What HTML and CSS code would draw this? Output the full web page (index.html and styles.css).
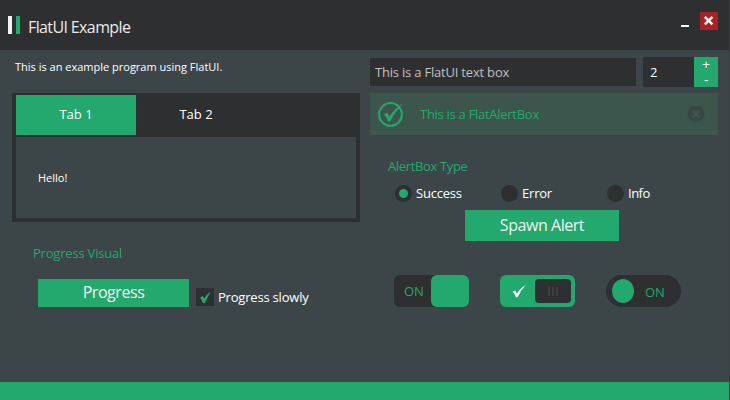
FILE: index.html
```html
<!DOCTYPE html>
<html lang="en">
<head>
<meta charset="utf-8">
<title>FlatUI Example</title>
<link rel="stylesheet" href="styles.css">
</head>
<body>
<div class="window">
  <header class="titlebar">
    <span class="mark mark-light"></span>
    <span class="mark mark-green"></span>
    <h1 class="title">FlatUI Example</h1>
    <span class="minimize"></span>
    <span class="close"><svg width="18" height="18" viewBox="0 0 18 18"><path d="M4.8 4.8l7.6 7.6M12.4 4.8l-7.6 7.6" stroke="#fff" stroke-width="2.5"/></svg></span>
  </header>
  <main class="content">
    <section class="left">
      <p class="intro">This is an example program using FlatUI.</p>
      <div class="tabs">
        <div class="tab-row"><div class="tab active">Tab 1</div><div class="tab">Tab 2</div></div>
        <div class="tab-page">Hello!</div>
      </div>
      <h2 class="group-title visual-title">Progress Visual</h2>
      <div class="progress-row">
        <div class="button progress-button">Progress</div>
        <div class="check"><svg width="18" height="18" viewBox="0 0 18 18"><path d="M4 9.4L7 8L8.3 10.4Q10.8 6 14.8 3.8Q12 8.3 8.8 15H6.8Q5.8 11.4 4 9.4Z" fill="#23a86d"/></svg></div>
        <span class="check-label">Progress slowly</span>
      </div>
    </section>
    <section class="right">
      <div class="inputs">
        <div class="textbox">This is a FlatUI text box</div>
        <div class="numeric"><span class="number">2</span><div class="spinner"><span>+</span><span>-</span></div></div>
      </div>
      <div class="alert">
        <svg class="alert-icon" width="28" height="28" viewBox="0 0 28 28"><circle cx="13.5" cy="14.5" r="11.4" fill="none" stroke="#23a86d" stroke-width="2"/><path d="M6.8 14.3L10.2 12.8L12.5 16.5Q18.5 7.5 26.5 3Q19 10.5 13 21.5H11.2Q9.5 16.5 6.8 14.3Z" fill="#23a86d"/></svg>
        <span class="alert-text">This is a FlatAlertBox</span>
        <svg class="dismiss" width="18" height="18" viewBox="0 0 18 18"><circle cx="9" cy="9" r="8.4" fill="#364843"/><path d="M5.4 5.4l7.2 7.2M12.6 5.4l-7.2 7.2" stroke="#3d564f" stroke-width="2.8"/></svg>
      </div>
      <h2 class="group-title type-title">AlertBox Type</h2>
      <div class="radios">
        <div class="radio"><span class="dot on"></span><span class="success">Success</span></div>
        <div class="radio"><span class="dot"></span><span class="error">Error</span></div>
        <div class="radio"><span class="dot"></span><span class="info">Info</span></div>
      </div>
      <div class="button spawn-button">Spawn Alert</div>
      <div class="toggles">
        <div class="toggle split"><span class="on-text">ON</span><span class="block"></span></div>
        <div class="toggle green"><svg width="14" height="14" viewBox="0 0 14 14"><path d="M.4 7.8L3.2 6.5L4.9 9.6Q8.5 4 13.8 .8Q9 6 5.5 13.2H4Q2.8 9.6 .4 7.8Z" fill="#fff"/></svg><span class="grip"><i></i><i></i><i></i></span></div>
        <div class="toggle round"><span class="ball"></span><span class="on-text">ON</span></div>
      </div>
    </section>
  </main>
  <footer class="progress-bar"></footer>
</div>
</body>
</html>
```
FILE: styles.css
```css
* { box-sizing: border-box; }
body { margin: 0; background: #3c4649; color: #fff; font-family: "Open Sans", "Noto Sans", sans-serif; font-size: 13px; line-height: 18px; letter-spacing: -.2px; }
h1, h2, p { margin: 0; font-weight: 400; }
svg { display: block; }
.window { width: 730px; height: 400px; overflow: hidden; display: flex; flex-direction: column; background: #3c4649; border-right: 1px solid #353d40; white-space: nowrap; }
.titlebar { height: 50px; display: flex; align-items: flex-start; margin-right: -1px; padding: 12px 12px 0 8px; background: #2d2f31; }
.mark { width: 4px; height: 18px; margin: 4px 4px 0 0; background: #23a86d; }
.mark-light { background: #f3f3f3; }
.title { margin: 4px 0 0 4px; font-size: 16px; line-height: 22px; letter-spacing: -.62px; color: #eaeaea; }
.minimize { width: 8px; height: 2px; margin: 13px 11px 0 auto; background: #fff; }
.close { width: 18px; height: 18px; background: #a82323; }
.content { display: flex; height: 332px; }
.left { width: 370px; padding-left: 12px; }
.right { width: 348px; padding-top: 7px; }
.intro { margin: 8px 0 17px 3px; font-size: 11px; font-weight: 500; letter-spacing: 0; }
.tabs { width: 348px; height: 129px; padding: 2px 4px 4px; background: #2d2f31; }
.tab-row { display: flex; height: 42px; }
.tab { width: 120px; height: 40px; line-height: 39px; text-align: center; letter-spacing: 0; }
.active { background: #23a86d; }
.tab-page { height: 81px; padding-left: 22px; background: #3c4649; font-size: 11px; font-weight: 500; line-height: 81px; letter-spacing: 0; }
.group-title { font-size: 13px; line-height: 18px; color: #23a86d; }
.visual-title { margin: 22px 0 0 21px; }
.progress-row { display: flex; margin: 17px 0 0 26px; }
.button { background: #23a86d; color: #f3f3f3; text-align: center; font-size: 16px; letter-spacing: -.45px; }
.progress-button { width: 151px; height: 28px; line-height: 27px; }
.check { width: 18px; height: 18px; margin: 9px 4px 0 7px; background: #2d2f31; }
.check-label { margin-top: 9px; }
.inputs { display: flex; align-items: center; gap: 7px; height: 30px; }
.textbox { width: 266px; height: 28px; padding-left: 5px; background: #2d2f31; color: #c0c0c0; line-height: 28px; }
.numeric { display: flex; width: 75px; height: 30px; background: #2d2f31; }
.number { width: 51px; padding-left: 7px; line-height: 31px; }
.spinner { width: 24px; height: 30px; background: #23a86d; display: grid; grid-template-rows: 15px 15px; text-align: center; font-family: "Liberation Sans", sans-serif; font-size: 13px; line-height: 15px; }
.alert { display: flex; align-items: center; height: 42px; margin-top: 6px; padding: 0 13px 0 7px; background: #3c554d; border-radius: 1px; color: #23a86d; }
.alert-text { margin-left: 15px; flex: 1; letter-spacing: -.28px; }
.type-title { margin: 22px 0 0 18px; letter-spacing: -.35px; }
.radios { display: grid; grid-template-columns: 106px 106px 80px; margin: 9px 0 0 24.5px; }
.radio { display: flex; align-items: center; gap: 4.5px; height: 18px; }
.dot { width: 17px; height: 17px; border-radius: 50%; background: #2d2f31; }
.on { display: flex; align-items: center; justify-content: center; }
.on::after { content: ""; width: 9px; height: 9px; border-radius: 50%; background: #23a86d; }
.info { letter-spacing: -.5px; }
.spawn-button { width: 154px; height: 31px; margin: 8px 0 0 95px; line-height: 30px; }
.toggles { display: flex; gap: 31px; margin: 34px 0 0 24px; }
.toggle { width: 75px; height: 32px; display: flex; align-items: center; background: #2d2f31; border-radius: 6px; color: #23a86d; }
.split { justify-content: space-between; padding-left: 10px; }
.block { width: 38px; height: 32px; border-radius: 6px; background: #23a86d; }
.green { background: #23a86d; justify-content: space-between; padding: 0 4px 0 12px; }
.grip { width: 36px; height: 24px; border-radius: 4px; background: #2d2f31; display: flex; align-items: center; justify-content: center; gap: 2px; }
.grip i { width: 2px; height: 9px; background: #3c3e40; }
.round { border-radius: 16px; padding-left: 6px; }
.ball { width: 22px; height: 24px; margin-right: 11px; border-radius: 50%; background: #23a86d; }
.round .on-text { padding-top: 2px; }
.progress-bar { height: 18px; background: #23a86d; }
```
